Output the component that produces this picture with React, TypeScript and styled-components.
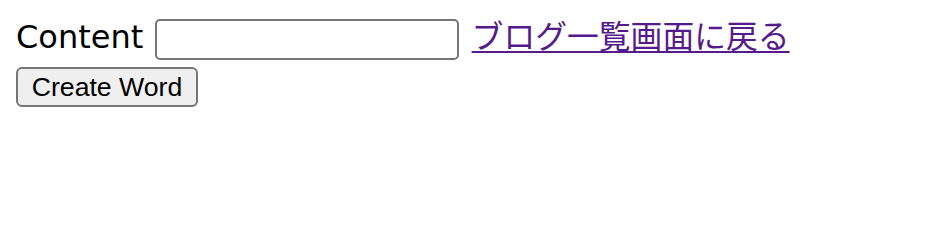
import React from "react";
import styled, { createGlobalStyle } from "styled-components";

const Global = createGlobalStyle`
  html, body { margin: 0; padding: 0; background: #fff; }
  body {
    margin: 16px;
    font-family: "DejaVu Sans", "Noto Sans CJK JP", sans-serif;
    font-size: 32px;
    color: #000;
  }
`;

const Form = styled.form`
  margin: 0;
`;

const Row = styled.div`
  height: 51px;
  line-height: 37px;
  white-space: nowrap;
`;

const Label = styled.label`
  font-family: "DejaVu Sans", sans-serif;
  font-size: 32px;
`;

const TextInput = styled.input`
  box-sizing: border-box;
  width: 304px;
  height: 41px;
  margin: 0 2px 0 2px;
  padding: 2px 4px;
  border: 2px solid #767676;
  border-radius: 5px;
  font-family: "Liberation Sans", Arial, sans-serif;
  font-size: 26.67px;
  line-height: normal;
  vertical-align: baseline;
  background: #fff;
`;

const BackLink = styled.a`
  color: #551a8b;
  text-decoration: underline;
  text-underline-offset: 3px;
  text-decoration-thickness: 2px;
  font-family: "Noto Sans CJK JP", sans-serif;
  font-size: 31.8px;
`;

const SubmitButton = styled.button`
  box-sizing: border-box;
  display: block;
  width: 182px;
  height: 40px;
  margin: 0;
  padding: 2px 12px;
  border: 2px solid #767676;
  border-radius: 6px;
  background: #efefef;
  color: #000;
  font-family: "Liberation Sans", Arial, sans-serif;
  font-size: 26.67px;
`;

export default function App() {
  return (
    <>
      <Global />
      <Form onSubmit={(e) => e.preventDefault()}>
        <Row>
          <Label htmlFor="content">Content</Label> <TextInput id="content" type="text" />{" "}
          <BackLink href="#">ブログ一覧画面に戻る</BackLink>
        </Row>
        <SubmitButton type="submit">Create Word</SubmitButton>
      </Form>
    </>
  );
}
